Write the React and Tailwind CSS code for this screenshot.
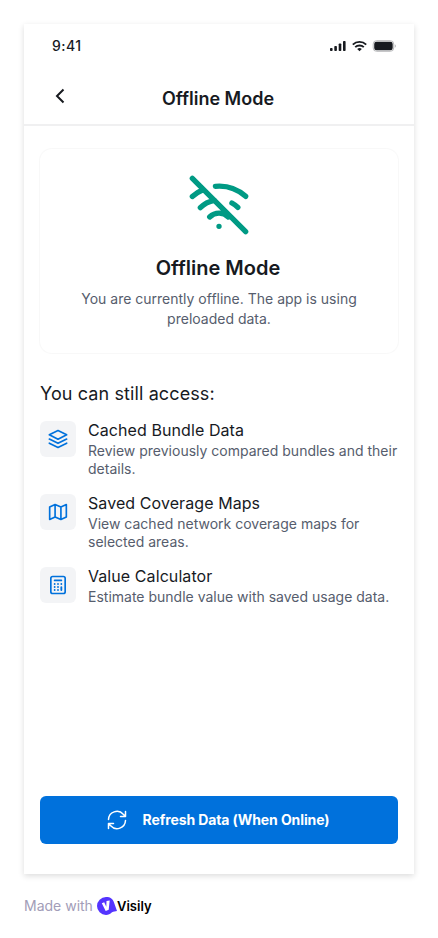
const items = [
  { icon: "layers", title: "Cached Bundle Data", text: "Review previously compared bundles and their details." },
  { icon: "map", title: "Saved Coverage Maps", text: "View cached network coverage maps for selected areas." },
  { icon: "calc", title: "Value Calculator", text: "Estimate bundle value with saved usage data." },
];

function ItemIcon({ name }) {
  return (
    <svg className="size-5" viewBox="0 0 24 24" fill="none" stroke="currentColor" strokeWidth="2" strokeLinecap="round" strokeLinejoin="round">
      {name === "layers" && (
        <>
          <path d="M12 1.800 1.600 7 12 12.200 22.400 7z" />
          <path d="m1.600 12 10.400 5.200 10.400-5.200" />
          <path d="m1.600 17 10.400 5.200 10.400-5.200" />
        </>
      )}
      {name === "map" && <path d="M8.500 3 2 6v15l6.500-3 7 3 6.500-3V3l-6.500 3zM8.500 3v15M15.500 6v15" />}
      {name === "calc" && (
        <>
          <rect x="3.400" y="1.800" width="17.200" height="20.400" rx="2.200" />
          <path d="M8 6.500h8M16 14.500v3.500M8 10.800h.01M12 10.800h.01M16 10.800h.01M8 14.400h.01M12 14.400h.01M8 18h.01M12 18h.01" strokeWidth="2.200" />
        </>
      )}
    </svg>
  );
}

function StatusIcons() {
  return (
    <svg className="h-3 w-[67px]" viewBox="0 0 67 12" fill="#171a1f">
      <rect x="0" y="8" width="2.600" height="3" rx=".8" />
      <rect x="4.300" y="6" width="2.600" height="5" rx=".8" />
      <rect x="8.700" y="3.500" width="2.600" height="7.500" rx=".8" />
      <rect x="13" y="1" width="2.600" height="10" rx=".8" />
      <g fill="none" stroke="#171a1f" strokeWidth="1.900">
        <path d="M22.800 4.600a9.600 9.600 0 0 1 13.400 0" />
        <path d="M25.200 7.200a6.100 6.100 0 0 1 8.600 0" />
      </g>
      <path d="M27.200 8.900a3.500 3.500 0 0 1 4.600 0l-2.300 2.400z" />
      <rect x="43.200" y=".7" width="20.500" height="10.600" rx="3.300" fill="none" stroke="#b9babc" />
      <rect x="44.200" y="1.800" width="18.500" height="8.400" rx="2.200" />
      <path d="M64.800 4.300v3.400c1.500-.6 1.500-2.800 0-3.400z" fill="#b9babc" />
    </svg>
  );
}

export default function App() {
  return (
    <div className="flex h-[938px] w-[438px] flex-col bg-white px-6 pt-6 font-['Inter',sans-serif] text-[#171a1f]">
      <main className="flex h-[850px] w-[390px] shrink-0 flex-col bg-white shadow-[0_2px_6px_rgba(0,0,0,0.14)]">
        <header className="h-[102px] shrink-0 border-b-2 border-[#f0f0f1]">
          <div className="flex h-11 items-center justify-between pr-[17px] pl-7">
            <span className="text-sm leading-5 font-medium tracking-[0.03em]">9:41</span>
            <StatusIcons />
          </div>
          <div className="grid h-[56px] grid-cols-[60px_1fr_62px] items-center pt-1">
            <svg className="ml-6 size-6" viewBox="0 0 24 24" fill="none" stroke="currentColor" strokeWidth="2">
              <path d="m15.500 3.500-6.500 6.500 6.500 6.500" />
            </svg>
            <h1 className="mt-0.5 text-center text-lg leading-7 font-semibold">Offline Mode</h1>
          </div>
        </header>

        <section className="mx-4 mt-[23px] flex h-[204px] shrink-0 flex-col items-center rounded-xl pt-6 shadow-[0_0_1px_1px_rgba(23,26,31,0.03)]">
          <svg className="size-16 text-[#009a84]" viewBox="0 0 24 24" fill="none" stroke="currentColor" strokeWidth="2" strokeLinecap="round" strokeLinejoin="round">
            <path d="m2 2 20 20M8.500 16.500a5 5 0 0 1 7 0M2 8.820a15 15 0 0 1 4.170-2.650M10.660 5c4.010-.36 8.140.9 11.340 3.760M16.850 11.250a10 10 0 0 1 2.220 1.680M5 13a10 10 0 0 1 5.240-2.760M12 20h.01" />
          </svg>
          <h2 className="mt-[17px] mr-0.5 text-xl leading-7 font-semibold">Offline Mode</h2>
          <p className="mt-[7px] w-[310px] text-center text-sm leading-5 text-[#565d6d]">You are currently offline. The app is using preloaded data.</p>
        </section>

        <section className="mx-4 mt-[27px]">
          <h2 className="text-lg leading-7 font-normal tracking-[0.006em]">You can still access:</h2>
          <ul className="mt-3 flex flex-col gap-4">
            {items.map((item) => (
              <li key={item.title} className="flex gap-3">
                <div className="mt-px flex size-9 shrink-0 items-center justify-center rounded-md bg-[#f3f4f6] text-[#0071dc]">
                  <ItemIcon name={item.icon} />
                </div>
                <div className="-mb-px w-[312px]">
                  <h3 className="mb-px text-base leading-[21px] font-normal tracking-[0.005em]">{item.title}</h3>
                  <p className="text-sm leading-[18px] text-[#565d6d]">{item.text}</p>
                </div>
              </li>
            ))}
          </ul>
        </section>

        <button className="mx-4 mt-auto mb-[30px] flex h-12 shrink-0 items-center justify-center gap-3.5 rounded-md bg-[#0071dc] pr-1 text-sm font-bold tracking-[-0.007em] text-white">
          <svg className="size-6" viewBox="0 0 24 24" fill="none" stroke="currentColor" strokeWidth="1.500" strokeLinecap="round" strokeLinejoin="round">
            <path d="M3.500 11.500a8.500 8.500 0 0 1 14.800-5.300L20.500 8.500M20.500 3.500v5h-5M20.500 12.500a8.500 8.500 0 0 1-14.800 5.300L3.500 15.500M8.500 15.500h-5v5" />
          </svg>
          <span>Refresh Data (When Online)</span>
        </button>
      </main>

      <footer className="mt-[21px] flex h-[22px] items-center">
        <span className="w-[73px] text-sm text-[#a29db8]">Made with</span>
        <svg className="h-[18px] w-5" viewBox="0 0 20 18">
          <path d="M9 0c4.500 0 7 2 8 5.500L20 14c-1.500.6-3.500.3-5 1.300C13 17 11.500 18 9 18A9 9 0 1 1 9 0z" fill="#5434ff" />
          <path d="m4.800 6.300 2.400-1 2.100 4.400.2-5.600 3.200-.6-1 9.300-3 1.200z" fill="white" />
        </svg>
        <span className="mt-px text-[13px] font-semibold text-black">Visily</span>
      </footer>
    </div>
  );
}
